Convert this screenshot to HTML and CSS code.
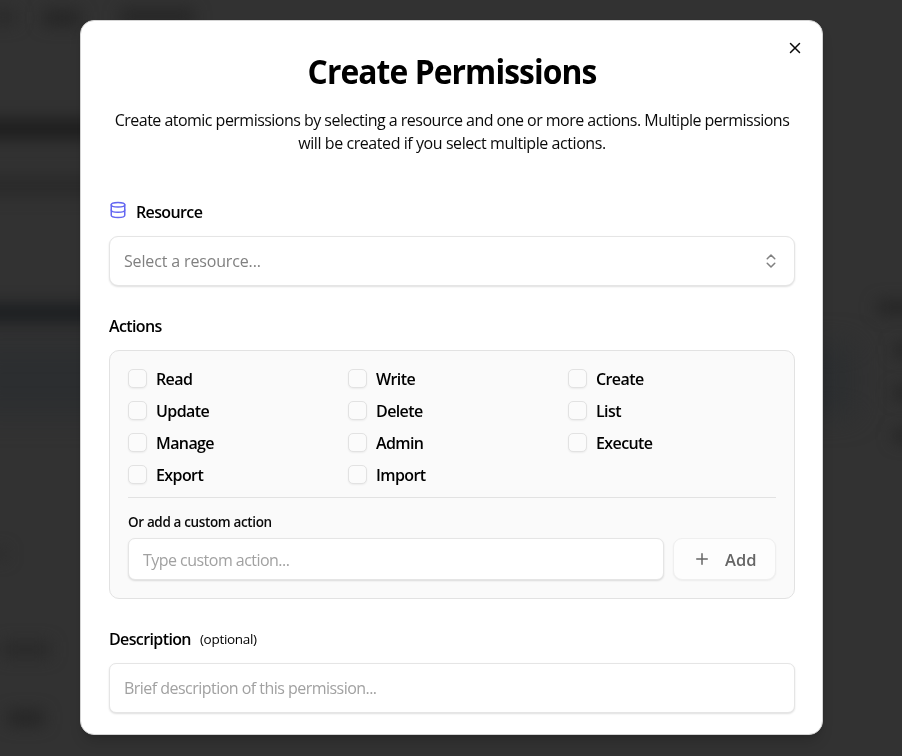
FILE: index.html
```html
<!DOCTYPE html>
<html lang="en">
<head>
<meta charset="utf-8">
<title>Create Permissions</title>
<link rel="stylesheet" href="styles.css">
</head>
<body>
<div class="backdrop" aria-hidden="true">
  <i class="smudge nav-a"></i><i class="smudge nav-b"></i><i class="smudge nav-c"></i>
  <i class="smudge heading"></i><i class="smudge band"></i>
  <i class="smudge notice"></i><i class="smudge title"></i>
  <i class="smudge row-a"></i><i class="smudge row-b"></i><i class="smudge row-c"></i>
  <i class="smudge side-a"></i><i class="smudge side-b"></i><i class="smudge side-c"></i><i class="smudge side-d"></i>
</div>
<main class="dialog" role="dialog" aria-labelledby="dialog-title">
  <button class="close" aria-label="Close"><svg width="18" height="18" viewBox="0 0 24 24"><path d="M18 6 6 18M6 6l12 12"/></svg></button>
  <header class="header">
    <h1 id="dialog-title">Create Permissions</h1>
    <p><span class="line-one">Create atomic permissions by selecting a resource and one or more actions. Multiple permissions</span><br><span class="line-two">will be created if you select multiple actions.</span></p>
  </header>
  <section class="field resource">
    <div class="label"><svg class="db" width="18" height="18" viewBox="0 0 24 24"><ellipse cx="12" cy="5" rx="9" ry="3"/><path d="M3 5v14a9 3 0 0 0 18 0V5"/><path d="M3 12a9 3 0 0 0 18 0"/></svg><span>Resource</span></div>
    <div class="control select"><span>Select a resource...</span><svg width="18" height="18" viewBox="0 0 24 24"><path d="m7 15 5 5 5-5M7 9l5-5 5 5"/></svg></div>
  </section>
  <section class="field actions">
    <div class="label"><span>Actions</span></div>
    <div class="panel">
      <div class="options">
        <label><i class="box"></i><span>Read</span></label>
        <label><i class="box"></i><span>Write</span></label>
        <label><i class="box"></i><span>Create</span></label>
        <label><i class="box"></i><span>Update</span></label>
        <label><i class="box"></i><span>Delete</span></label>
        <label><i class="box"></i><span>List</span></label>
        <label><i class="box"></i><span>Manage</span></label>
        <label><i class="box"></i><span>Admin</span></label>
        <label><i class="box"></i><span>Execute</span></label>
        <label><i class="box"></i><span>Export</span></label>
        <label><i class="box"></i><span>Import</span></label>
      </div>
      <div class="custom">
        <div class="custom-label">Or add a custom action</div>
        <div class="custom-row">
          <div class="control custom-input"><span>Type custom action...</span></div>
          <button class="add"><svg width="18" height="18" viewBox="0 0 24 24"><path d="M5 12h14M12 5v14"/></svg><span>Add</span></button>
        </div>
      </div>
    </div>
  </section>
  <section class="field description">
    <div class="label"><span>Description</span><small>(optional)</small></div>
    <div class="control brief"><span>Brief description of this permission...</span></div>
  </section>
</main>
</body>
</html>
```

FILE: styles.css
```css
* { box-sizing: border-box; }
html, body { height: 100%; }
body {
  margin: 0;
  overflow: hidden;
  background: #333;
  color: #0a0a0a;
  font-family: "Segoe UI", "Open Sans", "Noto Sans", sans-serif;
  font-size: 16px;
}
button { font: inherit; }
svg { fill: none; stroke: currentColor; stroke-width: 2; stroke-linecap: round; stroke-linejoin: round; flex: none; }

.backdrop { position: fixed; inset: 0; overflow: hidden; background: #323232; }
.smudge { position: absolute; background: #242424; filter: blur(8px); }
.nav-a { left: -10px; top: 11px; width: 26px; height: 13px; background: #292929; }
.nav-b { left: 43px; top: 11px; width: 38px; height: 14px; }
.nav-c { left: 120px; top: 10px; width: 74px; height: 13px; }
.heading { left: -20px; top: 119px; width: 120px; height: 20px; background: #1e1e1e; }
.band { left: -20px; top: 176px; width: 120px; height: 20px; background: #2a2a2a; }
.notice { left: -30px; top: 345px; width: 884px; height: 70px; background: #2c2e30; filter: blur(14px); }
.title { left: -20px; top: 304px; width: 120px; height: 18px; background: #1b1d20; }
.row-a { left: -8px; top: 549px; width: 14px; height: 10px; background: #292929; }
.row-b { left: 2px; top: 642px; width: 48px; height: 15px; background: #292929; }
.row-c { left: 8px; top: 711px; width: 36px; height: 14px; }
.side-a { left: 877px; top: 301px; width: 40px; height: 13px; }
.side-b { left: 894px; top: 344px; width: 30px; height: 12px; }
.side-c { left: 894px; top: 387px; width: 30px; height: 12px; }
.side-d { left: 894px; top: 430px; width: 30px; height: 12px; }

.dialog {
  position: relative;
  width: 743px;
  height: 715px;
  margin: 20px 0 0 80px;
  padding: 30px 27px 0 28px;
  border: 1px solid #d4d4d4;
  border-radius: 14px;
  background: #fff;
  box-shadow: 0 9px 14px -3px rgba(0,0,0,.16), 0 3px 6px -3px rgba(0,0,0,.16);
}
.close { position: absolute; top: 18px; right: 18px; padding: 0; border: 0; background: none; color: #0a0a0a; width: 18px; height: 18px; }
.close svg { display: block; }

.header { text-align: center; white-space: nowrap; }
h1 { margin: 0; font-size: 34px; line-height: 40px; font-weight: 700; letter-spacing: -1px; color: #000; transform: scaleX(.936); }
p { margin: 18px 0 0; line-height: 23px; }
.line-one { letter-spacing: -0.525px; }
.line-two { letter-spacing: -0.43px; }

.label { display: flex; align-items: center; height: 24px; font-weight: 600; letter-spacing: -0.62px; color: #000; }
.db { color: #6366f1; margin: -4px 9px 0 0; }
.resource { margin-top: 45px; }
.control {
  display: flex;
  align-items: center;
  border: 1px solid #e5e5e5;
  border-radius: 9px;
  background: #fff;
  box-shadow: 0 1px 2px rgba(0,0,0,.13);
  padding: 0 14px;
  color: #a1a1a1;
  letter-spacing: -0.53px;
}
.select { height: 50px; margin-top: 12px; justify-content: space-between; color: #808080; letter-spacing: -0.15px; }
.actions { margin-top: 28px; }
.panel { margin-top: 12px; height: 249px; padding: 16px 18px 0; border: 1px solid #e2e2e2; border-radius: 10px; background: #fafafa; }
.options { display: grid; grid-template-columns: repeat(3, 1fr); gap: 8px 12px; }
.options label { display: flex; align-items: center; gap: 9px; height: 24px; font-weight: 600; letter-spacing: -0.6px; color: #000; }
.box { width: 19px; height: 19px; margin-top: -2px; border: 1px solid #e2e2e2; border-radius: 5px; background: #fbfbfb; box-shadow: 0 1px 2px rgba(0,0,0,.06); }
.custom { margin-top: 10px; border-top: 1px solid #e2e2e2; padding-top: 14px; }
.custom-label { font-size: 13.5px; line-height: 20px; font-weight: 600; letter-spacing: -0.36px; color: #0a0a0a; }
.custom-row { display: flex; gap: 9px; margin-top: 6px; height: 42px; }
.custom-input { flex: 1; border-radius: 7px; padding-top: 1px; }
.add { display: flex; align-items: center; gap: 14px; width: 103px; padding: 0 19px; border: 1px solid #efefef; border-radius: 9px; background: #fdfdfd; box-shadow: 0 1px 2px rgba(0,0,0,.06); color: #666; font-size: 16.5px; font-weight: 600; }
.description { margin-top: 28px; }
.description small { margin-left: 9px; font-size: 13.5px; font-weight: 400; letter-spacing: -0.3px; }
.brief { height: 50px; margin-top: 12px; border-radius: 7px; }
```
